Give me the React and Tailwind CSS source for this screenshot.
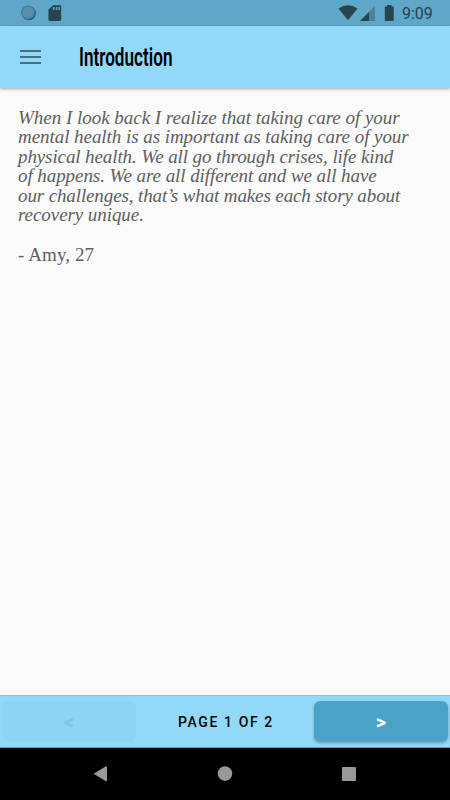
const quote = [
  { text: 'When I look back I realize that taking care of your', style: 'tracking-[-0.02px]' },
  { text: 'mental health is as important as taking care of your', style: 'tracking-[-0.055px]' },
  { text: 'physical health. We all go through crises, life kind', style: 'tracking-[-0.105px]' },
  { text: 'of happens. We are all different and we all have', style: 'tracking-[-0.07px]' },
  { text: 'our challenges, that’s what makes each story about', style: 'tracking-[-0.12px]' },
  { text: 'recovery unique.', style: 'tracking-[-0.07px]' },
]

function StatusBar() {
  return (
    <div className="flex h-[26px] shrink-0 items-center bg-[#5fa7c8]">
      <svg className="ml-5 h-[26px] w-[46px]" viewBox="20 0 46 26">
        <circle cx="28.8" cy="13.3" r="7" fill="#31586a" />
        <circle cx="28" cy="12.4" r="7" fill="#427b94" />
        <circle cx="28" cy="12.4" r="6" fill="#5490ab" stroke="#477f98" strokeWidth=".7" strokeDasharray="1 1.2" />
        <path d="M53 5.2h7q1.2 0 1.2 1.2v13.2q0 1.4-1.4 1.4h-10q-1.4 0-1.4-1.4V9.7z" fill="#28454f" />
        <path d="M53.7 7v3M56.5 7v3M59.2 7v3" stroke="#5fa7c8" strokeWidth="1.5" />
      </svg>
      <svg className="ml-auto h-[26px] w-[60px]" viewBox="336 0 60 26">
        <path d="M338.5 8.5Q348 2.2 357.5 8.5L348 20.3z" fill="#28454f" />
        <path d="M375 6v15h-15z" fill="#4a8098" />
        <path d="M369 12v9h-9z" fill="#28454f" />
        <path d="M387 5h4.5v1.5h2.2V21h-8.9V6.5H387z" fill="#28454f" />
      </svg>
      <span className="ml-[6px] w-12 pt-[2px] font-[Roboto,sans-serif] text-base leading-[26px] text-[#24414d]">9:09</span>
    </div>
  )
}

function Header() {
  return (
    <header className="relative flex h-[62px] shrink-0 items-center bg-[#92d9f9] shadow-[0_1px_3px_rgba(0,0,0,.35)]">
      <div className="ml-5 flex w-[21px] flex-col gap-1">
        <i className="h-0.5 bg-[#4b6f80]" />
        <i className="h-0.5 bg-[#4b6f80]" />
        <i className="h-0.5 bg-[#4b6f80]" />
      </div>
      <h1 className="ml-[38px] origin-left scale-x-[.685] pt-[2px] font-[Roboto,sans-serif] text-[25px] leading-8 font-semibold text-black">
        Introduction
      </h1>
    </header>
  )
}

function Pager() {
  return (
    <footer className="flex h-[53px] shrink-0 items-start justify-between border-t border-b border-t-[#83c8e8] border-b-[#5b9dbb] bg-[#92d9f9] px-0.5 pt-[5px] font-[Roboto,sans-serif]">
      <button className="h-10 w-[134px] rounded-md bg-[#8dd4f3] pt-px text-[20px] font-bold text-[#80c3e1]">&lt;</button>
      <span className="pt-px pl-[2px] text-sm leading-10 font-medium tracking-[1.6px] text-black">PAGE 1 OF 2</span>
      <button className="h-10 w-[134px] rounded-md bg-[#4ba2c8] pt-px text-[20px] font-bold text-white shadow-[0_2px_3px_rgba(0,0,0,.3)]">&gt;</button>
    </footer>
  )
}

function NavigationBar() {
  return (
    <nav className="h-[52px] shrink-0 bg-black">
      <svg className="h-[52px] w-[450px]" viewBox="0 748 450 52" fill="#999">
        <path d="M93.5 773.7L106 766.3q1 -.5 1 .6v13.8q0 1-1 .5z" />
        <circle cx="225" cy="773.6" r="7.3" />
        <rect x="342" y="767" width="14" height="14" rx=".8" />
      </svg>
    </nav>
  )
}

export default function App() {
  return (
    <div className="flex h-[800px] w-[450px] flex-col overflow-hidden bg-[#fafafa]">
      <StatusBar />
      <Header />
      <main className="flex-1 pt-[19.5px] pl-[18px] font-['Liberation_Serif',serif] text-[19px] leading-[19.6px] text-[#606060]">
        <p className="italic">
          {quote.map((line) => (
            <span key={line.text} className="block whitespace-nowrap">
              <span className={line.style}>{line.text}</span>
            </span>
          ))}
        </p>
        <p className="mt-[19.6px] tracking-[0.1px]">- Amy, 27</p>
      </main>
      <Pager />
      <NavigationBar />
    </div>
  )
}
